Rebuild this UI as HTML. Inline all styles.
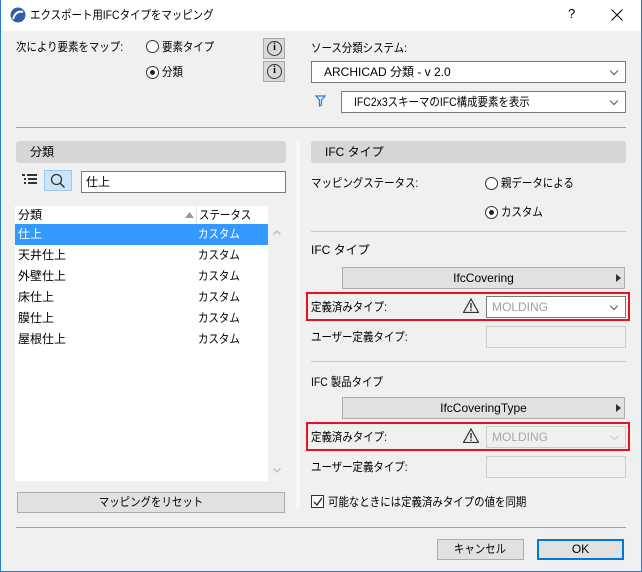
<!DOCTYPE html>
<html><head><meta charset="utf-8"><style>
*{box-sizing:border-box;margin:0;padding:0}
body{width:642px;height:572px;background:#f0f0f0;font-family:"Liberation Sans","Noto Sans CJK JP",sans-serif;font-size:12px;color:#000;position:relative;overflow:hidden}
.a{position:absolute;white-space:nowrap}
.t{line-height:16px}
.c{transform:scaleX(.87);transform-origin:0 50%}
.dd{position:absolute;background:#fff;border:1px solid #7a7a7a;line-height:20px;padding-left:12px}
.dd:after{content:"";position:absolute;right:8px;top:6px;width:5px;height:5px;border-right:1px solid #555;border-bottom:1px solid #555;transform:rotate(45deg)}
.rad{position:absolute;width:13px;height:13px;border:1px solid #333;border-radius:50%;background:#fff}
.rad.on:after{content:"";position:absolute;left:3px;top:3px;width:5px;height:5px;border-radius:50%;background:#222}
.btn{position:absolute;background:#e1e1e1;border:1px solid #adadad;text-align:center;line-height:19px}
.btn span{display:inline-block;transform:scaleX(.87)}
.hdr{position:absolute;background:#d6d6d6;border-radius:3px;height:22px;line-height:22px;padding-left:14px}
.sep{position:absolute;height:1px;background:#a0a0a0}
.info{position:absolute;width:22px;height:21px;background:#d9d9d9;border:1px solid #a8a8a8}
.info span{position:absolute;left:3px;top:2px;width:15px;height:15px;border:1.5px solid #333;border-radius:50%;text-align:center;font:bold 10px/12px "Liberation Serif",serif}
.red{position:absolute;border:2px solid #e81123}
.dis{position:absolute;background:#f0f0f0;border:1px solid #ccc}
.warn{position:absolute;width:16px;height:15px}
</style></head><body>
<div class="a" style="left:0;top:0;width:642px;height:31px;background:#fff"></div>
<div class="a" style="left:0;top:0;width:1px;height:572px;background:#2b7bd3"></div>
<div class="a" style="right:0;top:0;width:1px;height:572px;background:#2b7bd3"></div>
<div class="a" style="left:0;bottom:0;width:642px;height:1px;background:#2b7bd3"></div>
<svg class="a" style="left:10px;top:7px" width="16" height="16"><circle cx="8" cy="8" r="7.5" fill="#2f5fa8"/><path d="M3 12 Q6 3 13 5" stroke="#fff" stroke-width="2" fill="none"/></svg>
<div class="a t c" style="left:30px;top:7px">エクスポート用IFCタイプをマッピング</div>
<div class="a" style="left:568px;top:6px;font-size:13px">?</div>
<svg class="a" style="left:611px;top:9px" width="12" height="12"><path d="M0.5 0.5L11.5 11.5M11.5 0.5L0.5 11.5" stroke="#000" stroke-width="1"/></svg>

<div class="a t c" style="left:16px;top:39px">次により要素をマップ:</div>
<div class="rad" style="left:146px;top:40px"></div><div class="a t c" style="left:162px;top:39px">要素タイプ</div>
<div class="rad on" style="left:146px;top:66px"></div><div class="a t c" style="left:162px;top:64px">分類</div>
<div class="info" style="left:263px;top:38px"><span>i</span></div>
<div class="info" style="left:263px;top:61px"><span>i</span></div>

<div class="a t c" style="left:311px;top:40px">ソース分類システム:</div>
<div class="dd" style="left:311px;top:61px;width:315px;height:22px">ARCHICAD 分類 - v 2.0</div>
<svg class="a" style="left:315px;top:95px" width="11" height="12"><path d="M1 1H10L6.5 5V10L4.5 11V5Z" fill="none" stroke="#2b7bd3" stroke-width="1.2"/></svg>
<div class="dd" style="left:341px;top:91px;width:285px;height:22px"><span style="display:inline-block" class="c">IFC2x3スキーマのIFC構成要素を表示</span></div>

<div class="sep" style="left:16px;top:127px;width:610px"></div>

<div class="hdr" style="left:16px;top:141px;width:270px">分類</div>
<div class="a" style="left:296px;top:141px;width:4px;height:368px;background:#f8f8f8"></div>
<div class="hdr" style="left:311px;top:141px;width:315px">IFC タイプ</div>

<svg class="a" style="left:22px;top:173px" width="16" height="14"><g fill="#333"><rect x="0" y="1" width="3" height="2"/><rect x="5" y="1" width="10" height="2"/><rect x="2" y="5" width="2" height="2"/><rect x="6" y="5" width="9" height="2"/><rect x="2" y="9" width="2" height="2"/><rect x="6" y="9" width="9" height="2"/></g></svg>
<div class="a" style="left:44px;top:170px;width:28px;height:21px;background:#cce4f7;border:1px solid #99c9ef"></div>
<svg class="a" style="left:50px;top:173px" width="16" height="16"><circle cx="6.5" cy="6.5" r="5" fill="none" stroke="#333" stroke-width="1.3"/><path d="M10 10L14.5 14.5" stroke="#333" stroke-width="1.5"/></svg>
<div class="a" style="left:81px;top:171px;width:205px;height:22px;background:#fff;border:1px solid #7a7a7a;line-height:20px;padding-left:4px">仕上</div>

<div class="a" style="left:15px;top:206px;width:253px;height:275px;background:#fff"></div>
<div class="a t" style="left:18px;top:207px">分類</div>
<svg class="a" style="left:185px;top:212px" width="9" height="6"><path d="M0 6L4.5 0L9 6Z" fill="#999"/></svg>
<div class="a" style="left:196px;top:206px;width:1px;height:18px;background:#e5e5e5"></div>
<div class="a t c" style="left:199px;top:207px">ステータス</div>
<div class="a" style="left:15px;top:224px;width:253px;height:21px;background:#3399ff"></div>
<div class="a t" style="left:18px;top:226px;color:#fff">仕上</div><div class="a t c" style="left:198px;top:226px;color:#fff">カスタム</div>
<div class="a t" style="left:18px;top:247px">天井仕上</div><div class="a t c" style="left:198px;top:247px">カスタム</div>
<div class="a t" style="left:18px;top:268px">外壁仕上</div><div class="a t c" style="left:198px;top:268px">カスタム</div>
<div class="a t" style="left:18px;top:289px">床仕上</div><div class="a t c" style="left:198px;top:289px">カスタム</div>
<div class="a t" style="left:18px;top:310px">膜仕上</div><div class="a t c" style="left:198px;top:310px">カスタム</div>
<div class="a t" style="left:18px;top:331px">屋根仕上</div><div class="a t c" style="left:198px;top:331px">カスタム</div>
<svg class="a" style="left:273px;top:230px" width="8" height="5"><path d="M0.5 4.5L4 1L7.5 4.5" fill="none" stroke="#bbb" stroke-width="1.3"/></svg>
<svg class="a" style="left:273px;top:468px" width="8" height="5"><path d="M0.5 0.5L4 4L7.5 0.5" fill="none" stroke="#bbb" stroke-width="1.3"/></svg>

<div class="btn" style="left:17px;top:492px;width:268px;height:21px"><span>マッピングをリセット</span></div>

<div class="a t c" style="left:311px;top:175px">マッピングステータス:</div>
<div class="rad" style="left:485px;top:177px"></div><div class="a t c" style="left:501px;top:175px">親データによる</div>
<div class="rad on" style="left:485px;top:206px"></div><div class="a t c" style="left:501px;top:204px">カスタム</div>
<div class="sep" style="left:311px;top:231px;width:315px;background:#c8c8c8"></div>

<div class="a t" style="left:311px;top:242px">IFC タイプ</div>
<div class="btn" style="left:342px;top:267px;width:283px;height:22px;line-height:20px">IfcCovering</div>
<svg class="a" style="left:616px;top:274px" width="5" height="8"><path d="M0 0L5 4L0 8Z" fill="#333"/></svg>
<div class="red" style="left:306px;top:292px;width:324px;height:29px"></div>
<div class="a t c" style="left:311px;top:299px">定義済みタイプ:</div>
<svg class="warn" style="left:463px;top:298px"><path d="M8 1L15.5 14.5H0.5Z" fill="none" stroke="#333" stroke-width="1.2"/><rect x="7.3" y="5" width="1.4" height="5.5" fill="#333"/><rect x="7.3" y="11.5" width="1.4" height="1.5" fill="#333"/></svg>
<div class="dd" style="left:486px;top:296px;width:140px;height:22px;padding-left:5px;color:#a0a0a0">MOLDING</div>
<div class="a t c" style="left:311px;top:329px">ユーザー定義タイプ:</div>
<div class="dis" style="left:486px;top:326px;width:140px;height:22px"></div>
<div class="sep" style="left:311px;top:361px;width:315px;background:#c8c8c8"></div>

<div class="a t c" style="left:311px;top:374px">IFC 製品タイプ</div>
<div class="btn" style="left:342px;top:397px;width:283px;height:22px;line-height:20px">IfcCoveringType</div>
<svg class="a" style="left:616px;top:404px" width="5" height="8"><path d="M0 0L5 4L0 8Z" fill="#333"/></svg>
<div class="red" style="left:306px;top:422px;width:324px;height:29px"></div>
<div class="a t c" style="left:311px;top:429px">定義済みタイプ:</div>
<svg class="warn" style="left:463px;top:428px"><path d="M8 1L15.5 14.5H0.5Z" fill="none" stroke="#333" stroke-width="1.2"/><rect x="7.3" y="5" width="1.4" height="5.5" fill="#333"/><rect x="7.3" y="11.5" width="1.4" height="1.5" fill="#333"/></svg>
<div class="dis" style="left:486px;top:426px;width:140px;height:22px;line-height:20px;padding-left:5px;color:#a8a8a8">MOLDING<svg style="position:absolute;left:123px;top:8px" width="9" height="6"><path d="M0.5 0.5L4.5 4.5L8.5 0.5" fill="none" stroke="#ccc"/></svg></div>
<div class="a t c" style="left:311px;top:459px">ユーザー定義タイプ:</div>
<div class="dis" style="left:486px;top:456px;width:140px;height:22px"></div>

<div class="a" style="left:311px;top:495px;width:13px;height:13px;border:1px solid #333;background:#fff"></div>
<svg class="a" style="left:313px;top:497px" width="10" height="10"><path d="M1 5L4 8L9 1" fill="none" stroke="#222" stroke-width="1.3"/></svg>
<div class="a t c" style="left:328px;top:494px">可能なときには定義済みタイプの値を同期</div>

<div class="sep" style="left:16px;top:527px;width:610px"></div>
<div class="btn" style="left:437px;top:539px;width:87px;height:21px"><span>キャンセル</span></div>
<div class="btn" style="left:537px;top:539px;width:87px;height:21px;border:2px solid #0078d7;line-height:17px">OK</div>
</body></html>
